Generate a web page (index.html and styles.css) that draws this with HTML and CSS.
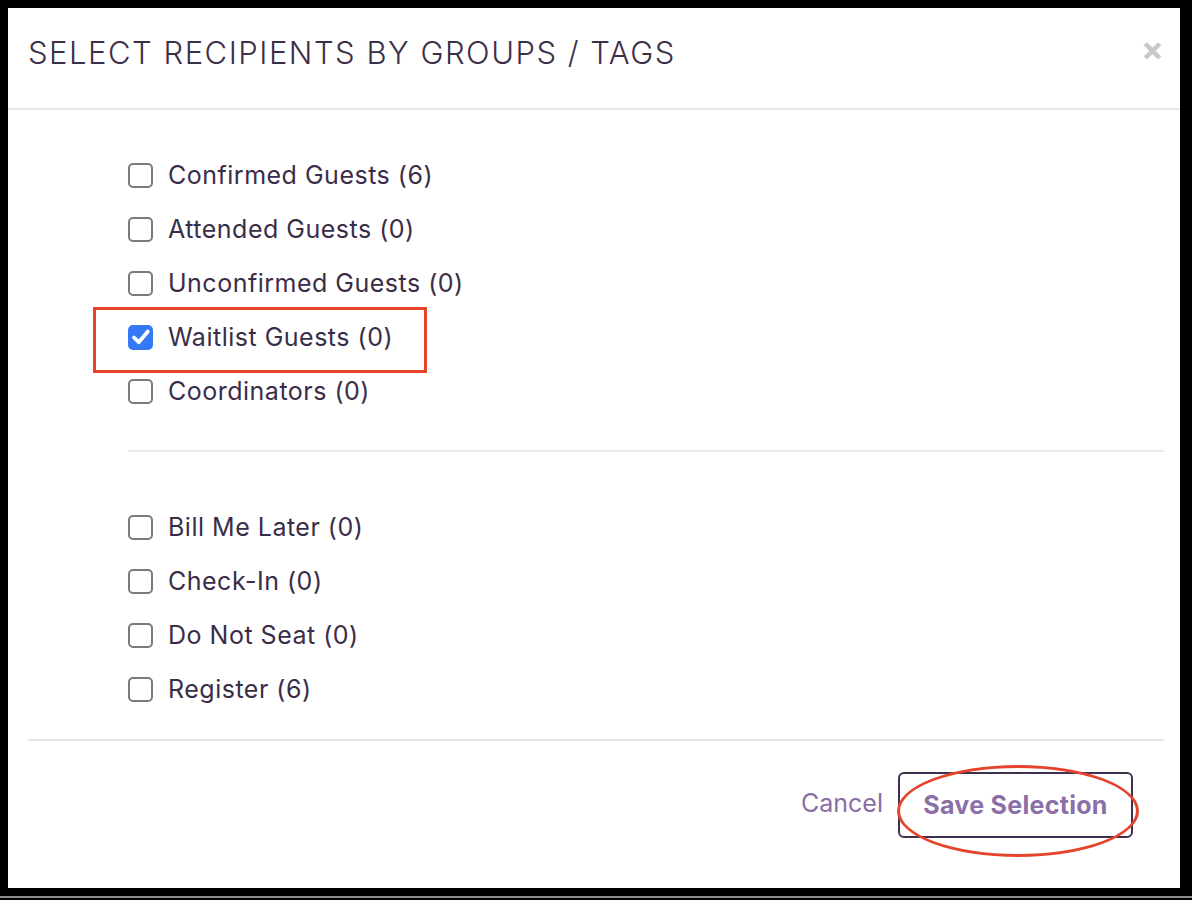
FILE: index.html
```html
<!DOCTYPE html>
<html>
<head>
<meta charset="utf-8">
<link rel="stylesheet" href="styles.css">
</head>
<body>
<div class="frame">
  <div class="modal">
    <div class="modal-header">
      <h1 class="title">SELECT RECIPIENTS BY GROUPS / TAGS</h1>
      <span class="close">&#x2715;</span>
    </div>
    <div class="modal-body">
      <ul class="list list-first">
        <li class="item"><span class="cb"></span><span class="label">Confirmed Guests (6)</span></li>
        <li class="item"><span class="cb"></span><span class="label">Attended Guests (0)</span></li>
        <li class="item"><span class="cb"></span><span class="label">Unconfirmed Guests (0)</span></li>
        <li class="item item-marked">
          <span class="cb cb-checked"><svg viewBox="0 0 24 24" width="24" height="24"><path d="M5 12.5 L9.8 17.2 L18.8 6.5" fill="none" stroke="#fff" stroke-width="3.8" stroke-linecap="round" stroke-linejoin="round"/></svg></span>
          <span class="label">Waitlist Guests (0)</span>
          <span class="red-box"></span>
        </li>
        <li class="item"><span class="cb"></span><span class="label">Coordinators (0)</span></li>
      </ul>
      <div class="divider"></div>
      <ul class="list list-second">
        <li class="item"><span class="cb"></span><span class="label">Bill Me Later (0)</span></li>
        <li class="item"><span class="cb"></span><span class="label">Check-In (0)</span></li>
        <li class="item"><span class="cb"></span><span class="label">Do Not Seat (0)</span></li>
        <li class="item"><span class="cb"></span><span class="label">Register (6)</span></li>
      </ul>
    </div>
    <div class="modal-footer">
      <span class="btn-cancel">Cancel</span>
      <span class="btn-save">Save Selection<span class="red-ellipse"></span></span>
    </div>
  </div>
</div>
</body>
</html>
```
FILE: styles.css
```css
* { box-sizing: border-box; }
html, body {
  margin: 0;
  padding: 0;
  background: #000;
}
body {
  width: 1192px;
  height: 900px;
  overflow: hidden;
  font-family: Inter, Roboto, "Liberation Sans", sans-serif;
}
.frame {
  width: 1192px;
  height: 898px;
  padding: 8px 12px 10px 8px;
  background: #000;
  border-bottom: 2px solid #8c8c8c;
}
.modal {
  width: 1172px;
  height: 880px;
  background: #fff;
  display: flex;
  flex-direction: column;
}
.modal-header {
  height: 102px;
  padding: 0 17px 0 20px;
  display: flex;
  align-items: center;
  justify-content: space-between;
  border-bottom: 2px solid #e6e6e6;
}
.title {
  margin: 0;
  font-size: 31px;
  font-weight: 300;
  color: #3c3049;
  letter-spacing: 1.5px;
  margin-top: -12px;
}
.close {
  color: #c9c9c9;
  font-size: 25px;
  font-weight: 700;
  margin-top: -14px;
  -webkit-text-stroke: 2px #c9c9c9;
  font-family: "DejaVu Sans", sans-serif;
}
.modal-body {
  padding: 38px 16px 0 120px;
}
.list {
  list-style: none;
  margin: 0;
  padding: 0;
}
.item {
  position: relative;
  height: 54px;
  display: flex;
  align-items: center;
  gap: 15px;
}
.cb {
  width: 25px;
  height: 25px;
  border: 2px solid #7a7a7a;
  border-radius: 5px;
  background: #fff;
  flex: none;
  display: flex;
  align-items: center;
  justify-content: center;
}
.cb-checked {
  background: #3478f6;
  border-color: #3478f6;
}
.cb-checked svg {
  display: block;
  width: 24px;
  height: 24px;
  flex: none;
}
.label {
  font-size: 25px;
  letter-spacing: 0.5px;
  color: #3a2d47;
}
.red-box {
  position: absolute;
  left: -35px;
  top: -3px;
  width: 334px;
  height: 66px;
  border: 3px solid #e5432b;
}
.divider {
  margin-top: 32px;
  height: 2px;
  background: #ebebeb;
}
.list-second {
  margin-top: 48px;
}
.modal-footer {
  margin: 23px 16px 0 20px;
  border-top: 2px solid #e6e6e6;
  padding: 31px 31px 0 0;
  display: flex;
  justify-content: flex-end;
  align-items: center;
  gap: 15px;
}
.btn-cancel {
  font-size: 25px;
  color: #8a6ea3;
  margin-top: -4px;
}
.btn-save {
  position: relative;
  width: 235px;
  height: 66px;
  border: 2px solid #3f3050;
  border-radius: 6px;
  display: flex;
  align-items: center;
  justify-content: center;
  font-size: 25px;
  font-weight: 700;
  letter-spacing: 0.3px;
  color: #8b6fa6;
}
.red-ellipse {
  position: absolute;
  left: -3px;
  top: -9px;
  width: 242px;
  height: 92px;
  border: 3px solid #e5432b;
  border-radius: 50%;
}
```
